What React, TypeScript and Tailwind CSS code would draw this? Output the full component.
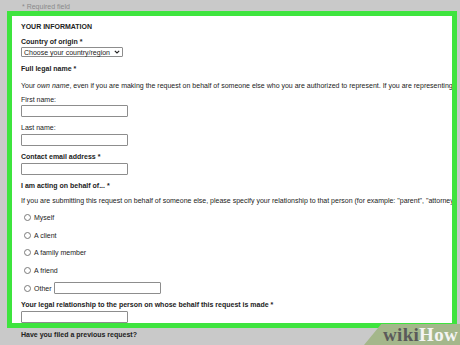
const TextBox = () => (
  <div className="h-[12px] w-[107px] shrink-0 rounded-[1px] border border-[#8d8d8d] bg-white" />
);

const Radio = ({ label, children }: { label: string; children?: React.ReactNode }) => (
  <div className="flex h-[17.7px] items-center">
    <span className="ml-[3px] h-[7px] w-[7px] rounded-full border border-[#7a7a7a] bg-white" />
    <span className="ml-[3px]">{label}</span>
    {children}
  </div>
);

export default function App() {
  return (
    <div className="relative h-[345px] w-[460px] overflow-hidden bg-[#c9c9c9] font-['Liberation_Sans',Arial,sans-serif] text-[7px] leading-[9px] text-[#222]">
      <div className="h-[11px] overflow-hidden pl-[22px] pt-[2px] text-[#8a8a8a]">* Required field</div>

      <section className="ml-[7px] h-[317px] w-[450px] overflow-hidden border-[5px] border-[#3ee43e] bg-white pl-[9px]">
        <div className="flex flex-col whitespace-nowrap">
          <h2 className="mt-[6px] font-bold">YOUR INFORMATION</h2>

          <p className="mt-[6px] font-bold">Country of origin *</p>
          <div className="mt-[1px] flex h-[10px] w-[102px] items-center justify-between rounded-[1px] border border-[#8d8d8d] bg-white pl-[2px] pr-[2px]">
            <span>Choose your country/region</span>
            <svg width="6" height="4" viewBox="0 0 6 4">
              <path d="M0.8 0.8 L3 3 L5.2 0.8" fill="none" stroke="#222" strokeWidth="1.1" />
            </svg>
          </div>

          <p className="mt-[7px] font-bold">Full legal name *</p>
          <p className="mt-[8px]">
            Your <i>own name</i>, even if you are making the request on behalf of someone else who you are authorized to
            represent. If you are representing a legal entity, please provide your own name.
          </p>

          <p className="mt-[5px]">First name:</p>
          <div className="mt-[1px]"><TextBox /></div>

          <p className="mt-[6px]">Last name:</p>
          <div className="mt-[2px]"><TextBox /></div>

          <p className="mt-[6px] font-bold">Contact email address *</p>
          <div className="mt-[2px]"><TextBox /></div>

          <p className="mt-[6px] font-bold">I am acting on behalf of... *</p>
          <p className="mt-[6px]">
            If you are submitting this request on behalf of someone else, please specify your relationship to that person
            (for example: "parent", "attorney").
          </p>

          <div className="mt-[3.5px] flex flex-col">
            <Radio label="Myself" />
            <Radio label="A client" />
            <Radio label="A family member" />
            <Radio label="A friend" />
            <Radio label="Other">
              <div className="ml-[2px]"><TextBox /></div>
            </Radio>
          </div>

          <p className="mt-[3px] font-bold">Your legal relationship to the person on whose behalf this request is made *</p>
          <div className="mt-[2px]"><TextBox /></div>
        </div>
      </section>

      <p className="mt-[2px] pl-[21px] font-bold">Have you filed a previous request?</p>

      <div className="absolute bottom-0 right-0 flex h-[21px] w-[96px] items-center justify-end bg-[#a4b78b] pr-[2px] [clip-path:polygon(18%_0,100%_0,100%_100%,0_100%)]">
        <span className="font-['Liberation_Serif',serif] text-[19px] font-bold leading-none tracking-[0.3px]">
          <span className="text-[#5a5a5a]">wiki</span>
          <span className="text-[#f4f4f4]">How</span>
        </span>
      </div>
    </div>
  );
}
